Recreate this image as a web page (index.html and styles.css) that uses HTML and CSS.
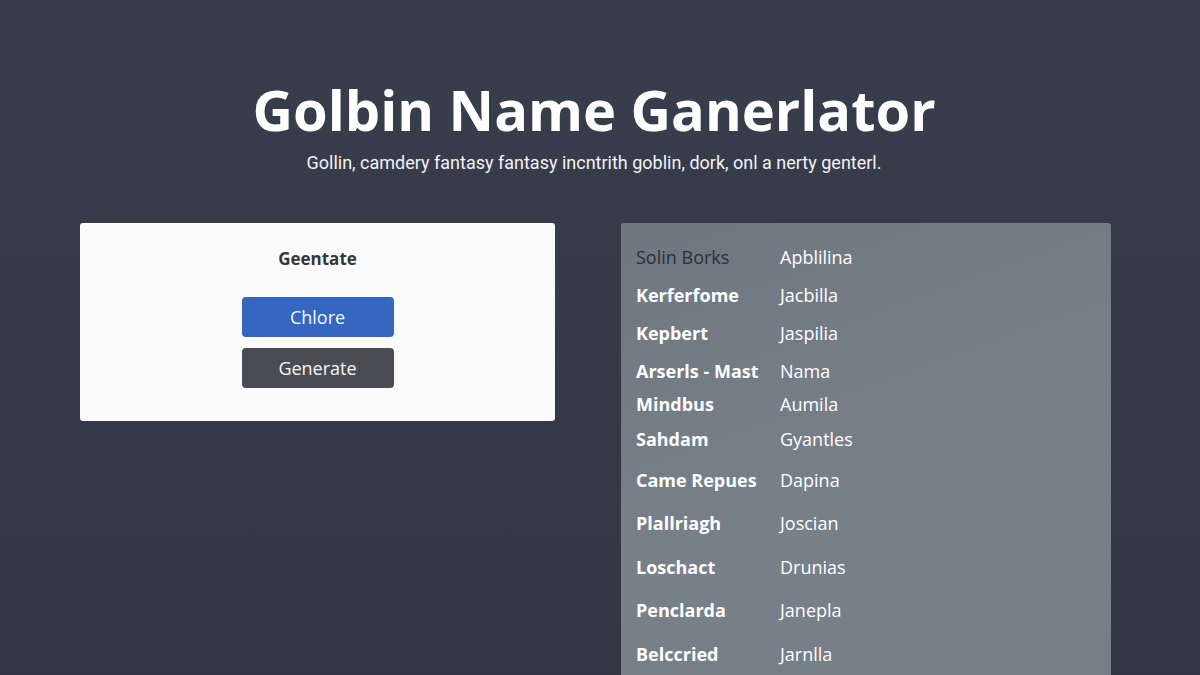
FILE: index.html
```html
<!DOCTYPE html>
<html>
<head>
<meta charset="utf-8">
<link rel="stylesheet" href="styles.css">
</head>
<body>
<header class="hero">
  <h1 class="title">Golbin Name Ganerlator</h1>
  <p class="subtitle">Gollin, camdery fantasy fantasy incntrith goblin, dork, onl a nerty genterl.</p>
</header>
<main class="content">
  <section class="card">
    <h2 class="card-title">Geentate</h2>
    <button class="btn btn-blue">Chlore</button>
    <button class="btn btn-dark">Generate</button>
  </section>
  <section class="names">
    <div class="names-grid">
      <span class="n1 muted">Solin Borks</span><span class="n2">Apblilina</span>
      <span class="n1">Kerferfome</span><span class="n2">Jacbilla</span>
      <span class="n1">Kepbert</span><span class="n2">Jaspilia</span>
      <span class="n1">Arserls - Mast</span><span class="n2">Nama</span>
      <span class="n1">Mindbus</span><span class="n2">Aumila</span>
      <span class="n1">Sahdam</span><span class="n2">Gyantles</span>
      <span class="n1">Came Repues</span><span class="n2">Dapina</span>
      <span class="n1">Plallriagh</span><span class="n2">Joscian</span>
      <span class="n1">Loschact</span><span class="n2">Drunias</span>
      <span class="n1">Penclarda</span><span class="n2">Janepla</span>
      <span class="n1">Belccried</span><span class="n2">Jarnlla</span>
    </div>
  </section>
</main>
</body>
</html>
```
FILE: styles.css
```css
* { box-sizing: border-box; }
html, body { height: 100%; }
body {
  margin: 0;
  width: 1200px;
  height: 675px;
  overflow: hidden;
  background: linear-gradient(180deg, #383e4b 0%, #343a47 50%, #303643 100%);
  font-family: "Open Sans", sans-serif;
}
.hero {
  text-align: center;
  padding: 77px 12px 0 0;
}
.title {
  margin: 0;
  font-family: "Open Sans", sans-serif;
  font-weight: 700;
  font-size: 56px;
  line-height: 64px;
  color: #ffffff;
}
.subtitle {
  margin: 11px 0 0;
  font-family: "Roboto", sans-serif;
  font-size: 18px;
  line-height: 22px;
  color: #f2f3f5;
}
.content {
  display: flex;
  align-items: flex-start;
  padding: 0 89px 0 80px;
  margin-top: 49px;
  gap: 66px;
}
.card {
  width: 475px;
  height: 198px;
  background: #fbfbfc;
  border-radius: 3px;
  display: flex;
  flex-direction: column;
  align-items: center;
  padding-top: 25px;
}
.card-title {
  margin: 0;
  font-size: 17px;
  line-height: 22px;
  font-weight: 700;
  color: #35363a;
}
.btn {
  width: 152px;
  height: 40px;
  border: none;
  border-radius: 4px;
  font-family: "Open Sans", sans-serif;
  font-size: 18px;
  color: #f4f6fa;
  padding: 0;
}
.btn-blue { background: #3567c0; margin-top: 27px; }
.btn-dark { background: #4b4c51; margin-top: 11px; }
.names {
  width: 490px;
  height: 460px;
  background: linear-gradient(160deg, #6f7781 0%, #78808a 60%, #757d87 100%);
  border-radius: 3px 3px 0 0;
  padding: 22px 0 0 15px;
}
.names-grid {
  display: grid;
  grid-template-columns: 144px auto;
  grid-template-rows: 38px 38px 38px 33px 35px 41px 43px 44px 43px 44px 40px;
  font-size: 18px;
  line-height: 24px;
  color: #ffffff;
}
.n1 { font-weight: 700; }
.n2 { font-weight: 400; }
.muted { font-weight: 400; color: #2c3038; }
```
